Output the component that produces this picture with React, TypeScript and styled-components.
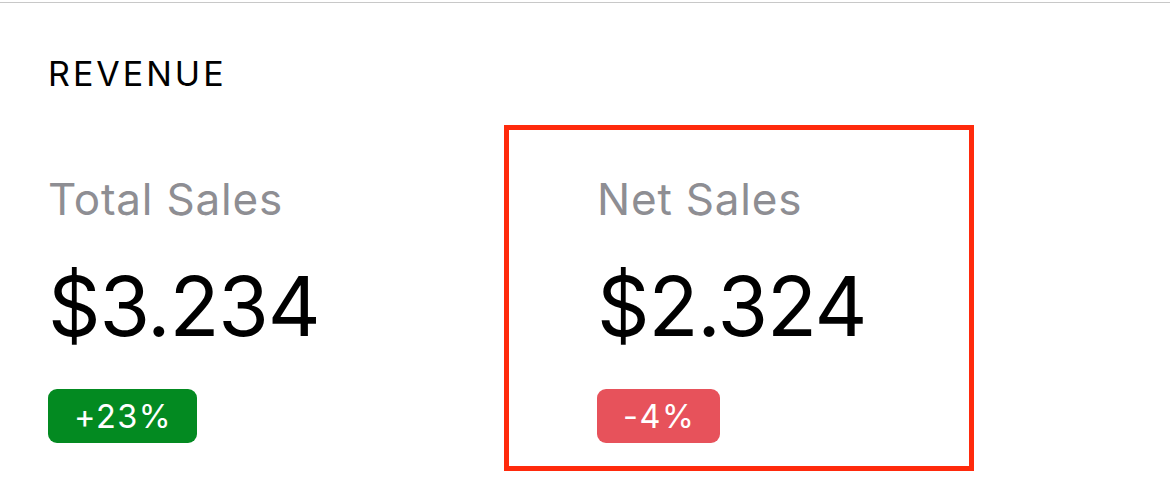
import React from "react";
import styled, { createGlobalStyle } from "styled-components";

const GlobalStyle = createGlobalStyle`
  html, body {
    margin: 0;
    padding: 0;
    background: #ffffff;
  }
  body {
    font-family: Inter, "Liberation Sans", Arial, sans-serif;
    -webkit-font-smoothing: antialiased;
  }
`;

const Page = styled.div`
  width: 1170px;
  height: 492px;
  overflow: hidden;
  background: #ffffff;
  padding-top: 2px;
  box-sizing: border-box;
`;

const TopRule = styled.div`
  height: 1px;
  background: #c8c8c8;
`;

const Section = styled.section`
  padding: 51px 0 0 48px;
  display: flex;
  flex-direction: column;
`;

const Heading = styled.h2`
  margin: 0;
  font-size: 34px;
  line-height: 40px;
  font-weight: 400;
  color: #000000;
  letter-spacing: 3px;
`;

const StatsRow = styled.div`
  display: flex;
  margin-top: 78px;
`;

const Stat = styled.div<{ $highlighted?: boolean }>`
  position: relative;
  width: 549px;
  display: flex;
  flex-direction: column;
  align-items: flex-start;

  ${({ $highlighted }) =>
    $highlighted &&
    `
    &::after {
      content: "";
      position: absolute;
      left: -93px;
      top: -47px;
      width: 470px;
      height: 346px;
      box-sizing: border-box;
      border: 5px solid #ff2a0c;
      pointer-events: none;
    }
  `}
`;

const Label = styled.div`
  font-size: 44px;
  line-height: 54px;
  color: #8e8e93;
  font-weight: 400;
  letter-spacing: 0.8px;
`;

const Value = styled.div`
  margin-top: 31px;
  font-size: 82px;
  line-height: 100px;
  color: #000000;
  font-weight: 400;
  letter-spacing: -1.2px;
`;

const Badge = styled.div<{ $tone: "up" | "down" }>`
  margin-top: 32px;
  height: 54px;
  display: inline-flex;
  align-items: center;
  padding: 0 24.5px 0 26px;
  border-radius: 9px;
  font-size: 32.5px;
  letter-spacing: 1.5px;
  color: #ffffff;
  background: ${({ $tone }) => ($tone === "up" ? "#038a21" : "#e7525b")};
  box-sizing: border-box;
`;

const stats = [
  { label: "Total Sales", value: "$3.234", change: "+23%", tone: "up" as const },
  { label: "Net Sales", value: "$2.324", change: "-4%", tone: "down" as const, highlighted: true },
];

export default function App() {
  return (
    <Page>
      <GlobalStyle />
      <TopRule />
      <Section>
        <Heading>REVENUE</Heading>
        <StatsRow>
          {stats.map((s) => (
            <Stat key={s.label} $highlighted={s.highlighted}>
              <Label>{s.label}</Label>
              <Value>{s.value}</Value>
              <Badge $tone={s.tone}>{s.change}</Badge>
            </Stat>
          ))}
        </StatsRow>
      </Section>
    </Page>
  );
}
